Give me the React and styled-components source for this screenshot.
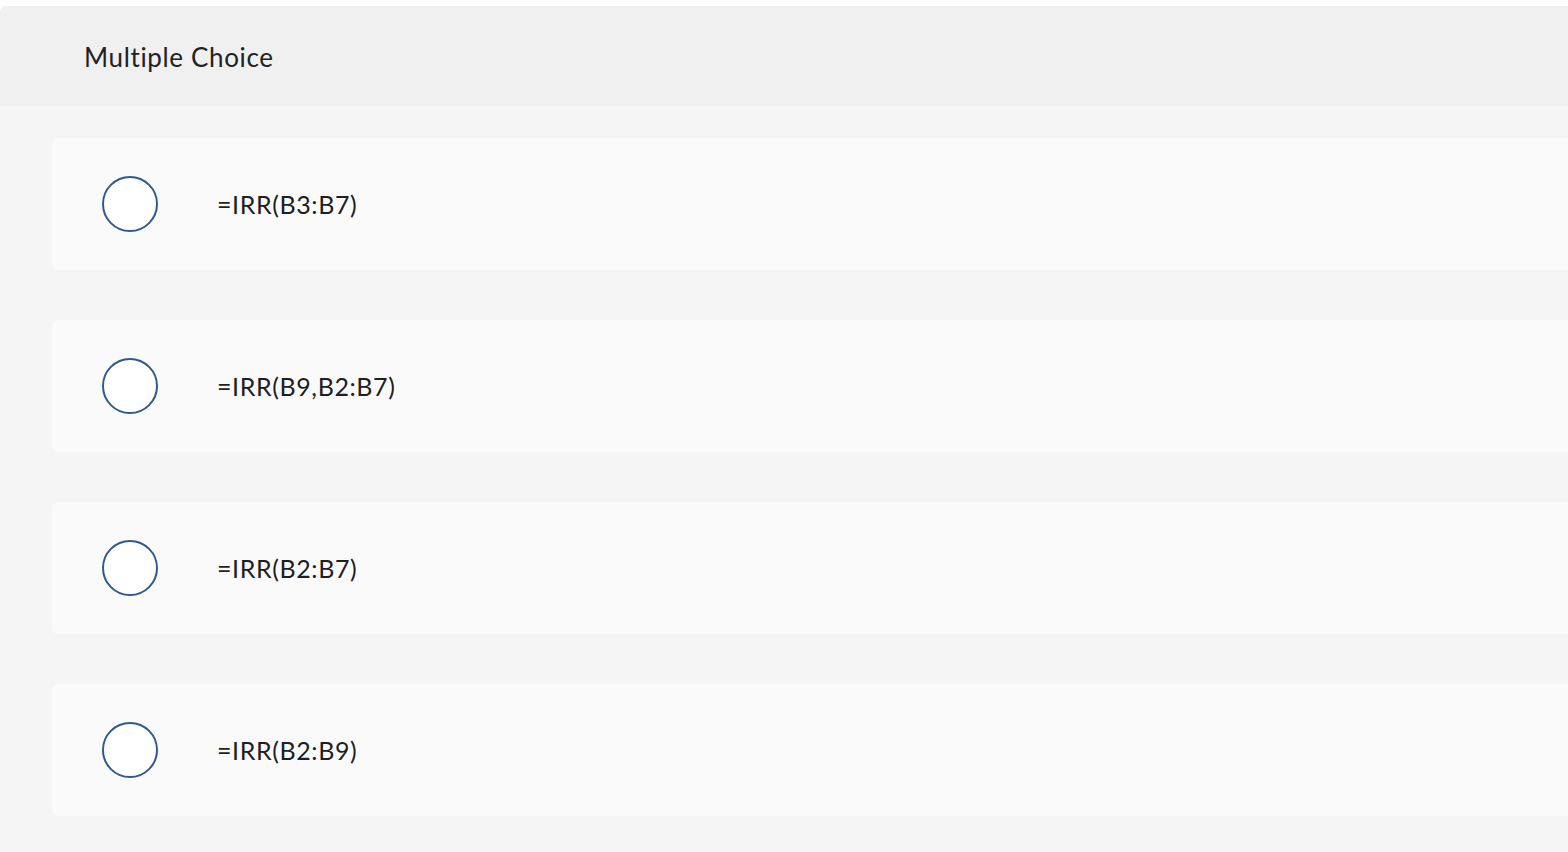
import React from 'react';
import styled, { createGlobalStyle } from 'styled-components';

const GlobalStyle = createGlobalStyle`
    html, body {
        margin: 0;
        padding: 0;
        background: #ffffff;
        overflow: hidden;
    }
    body {
        font-family: Lato, "Open Sans", "Liberation Sans", sans-serif;
        color: #1f1f1f;
    }
`;

const choices = ['=IRR(B3:B7)', '=IRR(B9,B2:B7)', '=IRR(B2:B7)', '=IRR(B2:B9)'];

const App = () => {

    return (
        <>
            <GlobalStyle />
            <Panel>
                <Header>
                    <h2>Multiple Choice</h2>
                </Header>
                <ChoiceList>
                    {choices.map((c) => (
                        <Choice key={c}>
                            <Radio />
                            <Label>{c}</Label>
                        </Choice>
                    ))}
                </ChoiceList>
            </Panel>
        </>
    );
}

export default App;

const Panel = styled.div`
    margin-top: 6px;
    width: 1620px;
    height: 846px;
    background: #f5f5f5;
    border-top-left-radius: 6px;
    overflow: hidden;
`;

const Header = styled.div`
    height: 100px;
    background: #f0f0f0;
    display: flex;
    align-items: center;
    padding-left: 84px;
    h2 {
        margin: 0;
        margin-top: 2px;
        font-size: 26px;
        font-weight: 400;
        letter-spacing: 0.65px;
        color: #222;
    }
`;

const ChoiceList = styled.div`
    display: flex;
    flex-direction: column;
    gap: 50px;
    padding: 32px 0 0 52px;
`;

const Choice = styled.div`
    height: 132px;
    background: #fafafa;
    border-radius: 6px;
    display: flex;
    align-items: center;
    padding-left: 50px;
`;

const Radio = styled.span`
    width: 56px;
    height: 56px;
    box-sizing: border-box;
    border: 2px solid #2f5a8f;
    border-radius: 50%;
    background: #ffffff;
    flex-shrink: 0;
`;

const Label = styled.span`
    margin-left: 59px;
    font-size: 25px;
    letter-spacing: 0.6px;
    color: #1f1f1f;
`;
